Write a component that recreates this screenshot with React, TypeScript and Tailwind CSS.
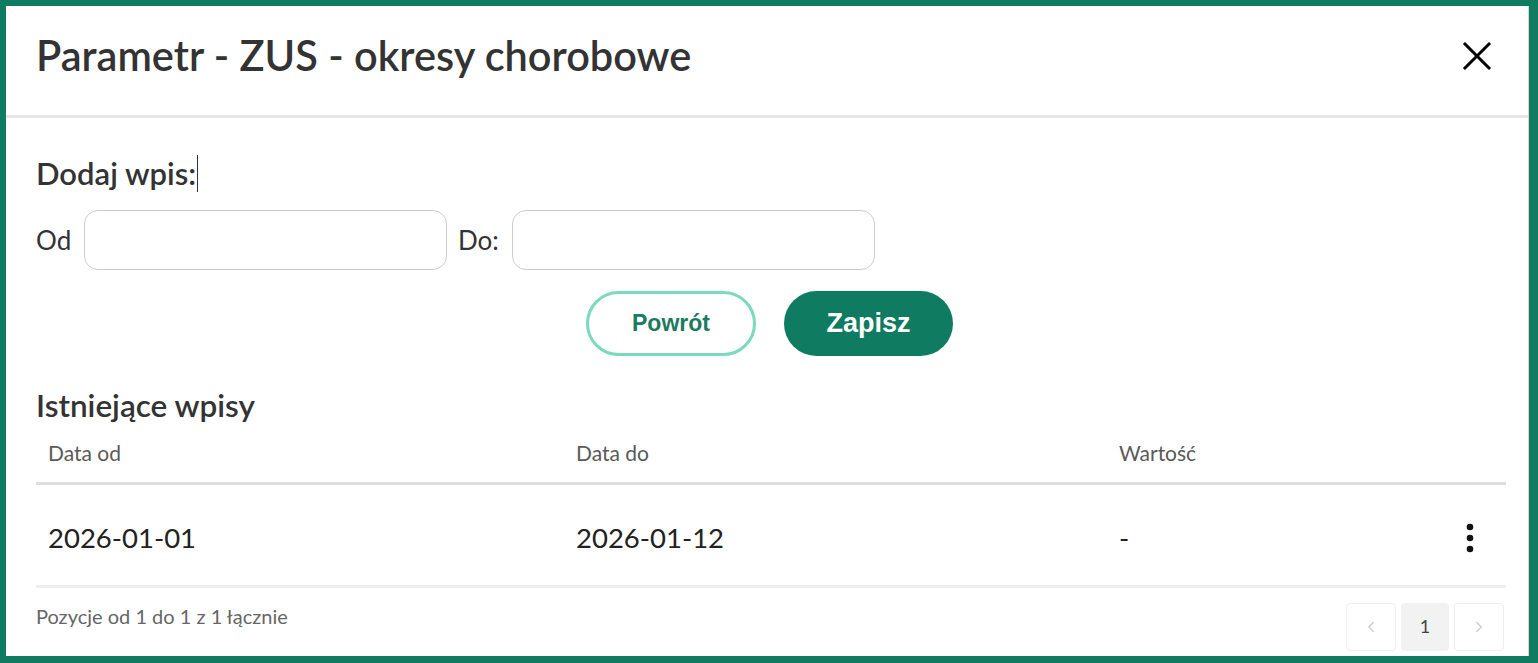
import React from 'react';
import { ChevronLeft, ChevronRight } from 'lucide-react';

const lato = { fontFamily: 'Lato, "Noto Sans", sans-serif' };
const btnFont = { fontFamily: '"Liberation Sans", Arial, sans-serif' };

export default function App() {
  return (
    <div className="w-[1538px] h-[663px] bg-[#0f7b61] pt-[6px] pl-[6px] pr-[9px] pb-[7px]" style={lato}>
      <div className="h-full bg-white flex flex-col border-r border-[#d8d8d8]">
        {/* Header */}
        <div className="h-[112px] shrink-0 flex items-center justify-between pl-[30px] pr-[36px] pb-[10px] border-b-[3px] border-[#e6e6e6]">
          <h1 className="text-[41.5px] font-semibold text-[#333333] leading-none">
            Parametr - ZUS - okresy chorobowe
          </h1>
          <svg width="30" height="30" viewBox="0 0 30 30" className="text-black">
            <path d="M3 3 L27 27 M27 3 L3 27" stroke="currentColor" strokeWidth="3" strokeLinecap="square" />
          </svg>
        </div>

        {/* Body */}
        <div className="flex-1 flex flex-col pl-[30px] pr-[22px]">
          <div className="mt-[37px] flex items-center h-[37px]">
            <span className="text-[31px] font-semibold text-[#333333] leading-none">Dodaj wpis:</span>
            <span className="w-px h-[37px] bg-[#333333] ml-[1px]" />
          </div>

          <div className="mt-[18px] flex items-center h-[60px]">
            <label className="w-[48px] text-[26px] text-[#333333]">Od</label>
            <input className="w-[363px] h-[60px] rounded-[14px] border border-[#cccccc] outline-none px-3" />
            <label className="w-[65px] pl-[11px] text-[26px] text-[#333333]">Do:</label>
            <input className="w-[363px] h-[60px] rounded-[14px] border border-[#cccccc] outline-none px-3" />
          </div>

          <div className="mt-[21px] flex justify-center gap-[28px] pr-[3px]">
            <button
              className="w-[170px] h-[65px] rounded-full border-[3px] border-[#7bd9bf] bg-white text-[#1b7a5f] text-[23px] font-bold"
              style={btnFont}
            >
              Powrót
            </button>
            <button
              className="w-[169px] h-[65px] rounded-full bg-[#0f7b61] text-white text-[27px] font-bold"
              style={btnFont}
            >
              Zapisz
            </button>
          </div>

          <h2 className="mt-[34px] text-[31.5px] font-semibold text-[#333333] leading-none">Istniejące wpisy</h2>

          {/* Table */}
          <div className="mt-[14px]">
            <div className="grid grid-cols-[528px_543px_1fr_80px] h-[49px] items-center pb-[13px] border-b-[3px] border-[#dedede] text-[21px] leading-none text-[#5a5a5a]">
              <div className="pl-3">Data od</div>
              <div className="pl-3">Data do</div>
              <div className="pl-3">Wartość</div>
              <div />
            </div>
            <div className="grid grid-cols-[528px_543px_1fr_80px] h-[103px] items-center pt-[6px] border-b-[3px] border-[#eeeeee] text-[27.5px] leading-none text-[#222222]">
              <div className="pl-3">2026-01-01</div>
              <div className="pl-3">2026-01-12</div>
              <div className="pl-3">-</div>
              <div className="flex justify-end pr-[31px]">
                <svg width="10" height="30" viewBox="0 0 10 30">
                  <circle cx="5" cy="4" r="3.3" fill="#111" />
                  <circle cx="5" cy="15" r="3.3" fill="#111" />
                  <circle cx="5" cy="26" r="3.3" fill="#111" />
                </svg>
              </div>
            </div>
          </div>

          {/* Footer */}
          <div className="flex justify-between items-start mt-[15px]">
            <span className="text-[20px] leading-[24px] text-[#666666] mt-[1px]">Pozycje od 1 do 1 z 1 łącznie</span>
            <div className="flex gap-[5px] mr-[2px]">
              <div className="w-[50px] h-[48px] rounded-[4px] border border-[#efefef] flex items-center justify-center text-[#cfcfcf]">
                <ChevronLeft size={18} strokeWidth={2} />
              </div>
              <div className="w-[48px] h-[48px] rounded-[4px] bg-[#f2f2f2] flex items-center justify-center text-[18px] text-[#444444]">
                1
              </div>
              <div className="w-[50px] h-[48px] rounded-[4px] border border-[#efefef] flex items-center justify-center text-[#cfcfcf]">
                <ChevronRight size={18} strokeWidth={2} />
              </div>
            </div>
          </div>
        </div>
      </div>
    </div>
  );
}
